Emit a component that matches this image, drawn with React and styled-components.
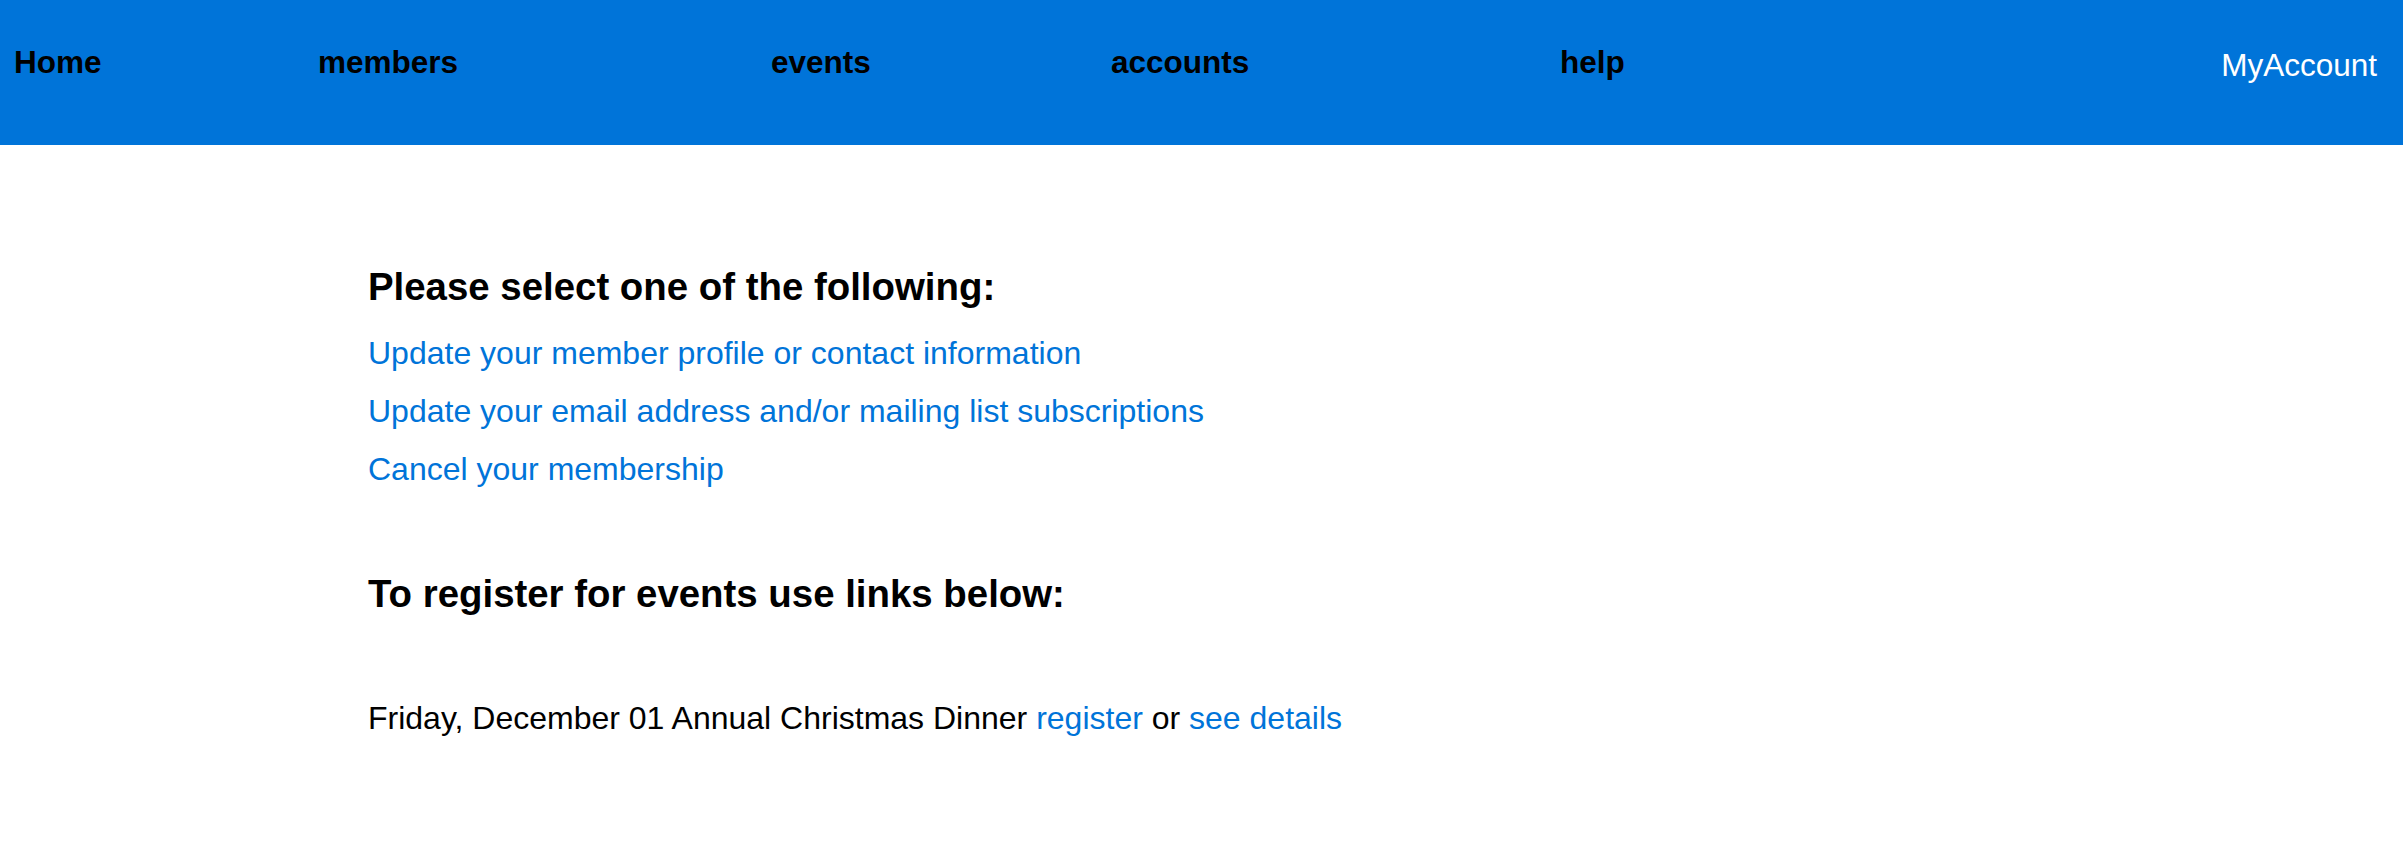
import React from "react";
import styled, { createGlobalStyle } from "styled-components";

const GlobalStyle = createGlobalStyle`
  html, body {
    margin: 0;
    padding: 0;
    background: #ffffff;
  }
  body {
    font-family: "Liberation Sans", Arial, Helvetica, sans-serif;
    color: #000000;
  }
`;

const Header = styled.header`
  display: flex;
  align-items: flex-start;
  height: 145px;
  box-sizing: border-box;
  padding: 44px 26px 0 14px;
  background: #0074d9;
`;

const NavItem = styled.a`
  display: block;
  flex: 0 0 auto;
  width: ${(p) => (p.$width ? `${p.$width}px` : "auto")};
  font-size: 31.5px;
  font-weight: 700;
  line-height: normal;
  color: #000000;
  text-decoration: none;
  cursor: pointer;
`;

const AccountLink = styled.a`
  display: block;
  margin-left: auto;
  margin-top: 3px;
  font-size: 31.5px;
  font-weight: 400;
  line-height: normal;
  color: #ffffff;
  text-decoration: none;
  cursor: pointer;
`;

const Main = styled.main`
  display: flex;
  flex-direction: column;
  padding: 119px 0 0 368px;
`;

const Heading = styled.h2`
  margin: 0;
  margin-top: ${(p) => p.$top || 0}px;
  font-size: 38.4px;
  font-weight: 700;
  line-height: 46px;
`;

const LinkList = styled.div`
  display: flex;
  flex-direction: column;
  margin-top: 14px;
`;

const BlueLink = styled.a`
  color: #0074d9;
  text-decoration: none;
  cursor: pointer;
`;

const LinkRow = styled(BlueLink)`
  display: block;
  font-size: 32px;
  line-height: 58px;
`;

const EventLine = styled.p`
  margin: 72px 0 0;
  font-size: 32px;
  line-height: 58px;
`;

const navItems = [
  { label: "Home", width: 304 },
  { label: "members", width: 453 },
  { label: "events", width: 340 },
  { label: "accounts", width: 449 },
  { label: "help" },
];

const memberLinks = [
  "Update your member profile or contact information",
  "Update your email address and/or mailing list subscriptions",
  "Cancel your membership",
];

export default function App() {
  return (
    <>
      <GlobalStyle />
      <Header>
        {navItems.map((item) => (
          <NavItem key={item.label} $width={item.width}>
            {item.label}
          </NavItem>
        ))}
        <AccountLink>MyAccount</AccountLink>
      </Header>
      <Main>
        <Heading>Please select one of the following:</Heading>
        <LinkList>
          {memberLinks.map((text) => (
            <LinkRow key={text}>{text}</LinkRow>
          ))}
        </LinkList>
        <Heading $top={73}>To register for events use links below:</Heading>
        <EventLine>
          Friday, December 01 Annual Christmas Dinner <BlueLink>register</BlueLink> or{" "}
          <BlueLink>see details</BlueLink>
        </EventLine>
      </Main>
    </>
  );
}
